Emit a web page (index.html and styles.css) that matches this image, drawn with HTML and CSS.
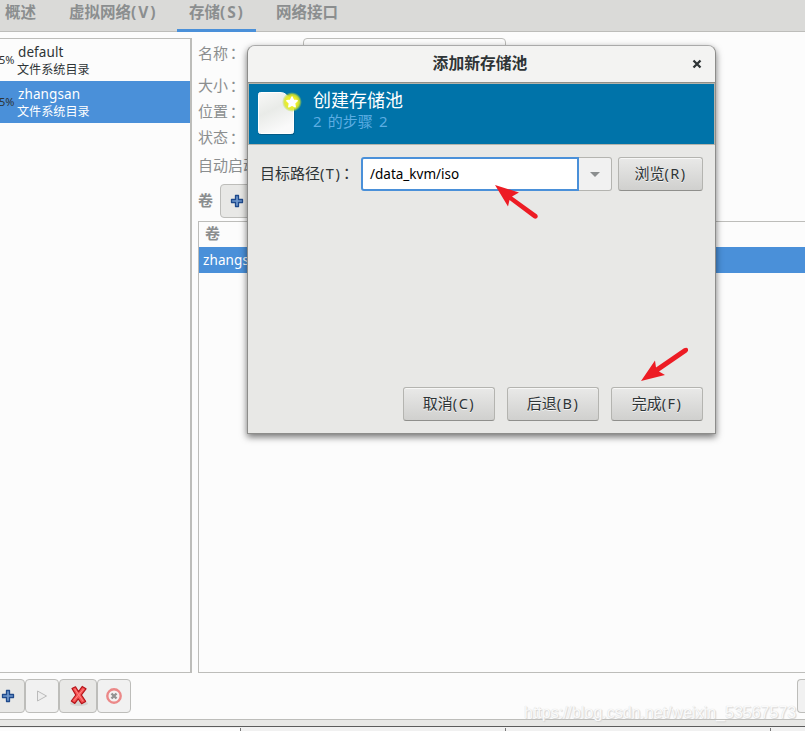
FILE: index.html
```
<!DOCTYPE html>
<html lang="zh-CN">
<head>
  <meta charset="utf-8" />
  <title>添加新存储池</title>
  <link rel="stylesheet" href="styles.css">
</head>
<body>
  <nav class="tabs">
    <div class="tab">概述</div>
    <div class="tab">虚拟网络<span class="key">(V)</span></div>
    <div class="tab active">存储<span class="key">(S)</span></div>
    <div class="tab">网络接口</div>
  </nav>

  <main class="content">
    <div class="pools">
      <div class="pool">
        <span class="percent">15%</span>
        <div><div class="pool-name">default</div><div class="pool-type">文件系统目录</div></div>
      </div>
      <div class="pool selected">
        <span class="percent">15%</span>
        <div><div class="pool-name">zhangsan</div><div class="pool-type">文件系统目录</div></div>
      </div>
    </div>

    <div class="details">
      <div class="field name-field"><label>名称<span class="colon" lang="zh-Hant">：</span></label><div class="name-input"></div></div>
      <div class="field">大小<span class="colon" lang="zh-Hant">：</span></div>
      <div class="field">位置<span class="colon" lang="zh-Hant">：</span></div>
      <div class="field">状态<span class="colon" lang="zh-Hant">：</span></div>
      <div class="field auto-field">自动启动</div>
      <div class="volume-bar">
        <span>卷</span>
        <div class="tool add-volume">
          <svg width="14" height="14" viewBox="0 0 14 14"><path d="M5.5 1.5h3v4h4v3h-4v4h-3v-4h-4v-3h4z" fill="#6d96cc" stroke="#1f4a8c" stroke-width="1.3" stroke-linejoin="round"/></svg>
        </div>
      </div>
      <div class="volumes">
        <div class="volumes-head">卷</div>
        <div class="volume">zhangsan</div>
      </div>
    </div>
  </main>

  <div class="toolbar">
    <div class="tool t-add">
      <svg width="14" height="14" viewBox="0 0 14 14"><path d="M5.5 1.5h3v4h4v3h-4v4h-3v-4h-4v-3h4z" fill="#6d96cc" stroke="#1f4a8c" stroke-width="1.3" stroke-linejoin="round"/></svg>
    </div>
    <div class="tool t-play disabled">
      <svg width="12" height="12" viewBox="0 0 12 12"><path d="M1.5 1v10L10.500 6z" fill="#eee" stroke="#bbb"/></svg>
    </div>
    <div class="tool t-delete">
      <svg width="20" height="22" viewBox="0 0 20 22">
        <ellipse cx="10" cy="18.5" rx="9" ry="2.4" fill="#d3d3d0"/>
        <path d="M3 3.5L6.5 1.8L9.6 6.7L13.2 1.5L17 3.8L12.4 10L16.6 16.4L12.6 18.7L9.2 13.8L5.8 18.4L2.3 16L6.8 10z" fill="#f55454" stroke="#b51218" stroke-width="1.2" stroke-linejoin="round"/>
        <path d="M5.8 4L14 16M14.5 4L5 15.5" stroke="#ff8583" stroke-width="1"/>
      </svg>
    </div>
    <div class="tool t-stop disabled">
      <svg width="18" height="18" viewBox="0 0 18 18"><circle cx="9" cy="9" r="6.7" fill="#f4f0f0" stroke="#eb8888" stroke-width="2.4"/><path d="M6.5 6.5l5 5M11.5 6.5l-5 5" stroke="#929292" stroke-width="2.4"/></svg>
    </div>
    <div class="tool t-apply disabled"></div>
  </div>
  <div class="window-edge"></div>
  <footer class="taskbar"><i></i><i></i><i></i></footer>

  <div class="dialog">
    <header class="dialog-title">
      <span>添加新存储池</span>
      <svg class="close" width="10" height="10" viewBox="0 0 10 10"><path d="M1.5 1.5l7 7M8.5 1.5l-7 7" stroke="#2e3436" stroke-width="2.3"/></svg>
    </header>
    <div class="banner">
      <svg width="49" height="48" viewBox="0 0 49 48">
        <defs>
          <linearGradient id="paper" x1="0" y1="0" x2="0.4" y2="1">
            <stop offset="0" stop-color="#f8f8f7"/><stop offset="0.5" stop-color="#e9ebe8"/><stop offset="1" stop-color="#fafafa"/>
          </linearGradient>
          <radialGradient id="glow"><stop offset="0.5" stop-color="#f0ef25"/><stop offset="0.75" stop-color="#dce827" stop-opacity="0.85"/><stop offset="1" stop-color="#a4d43d" stop-opacity="0"/></radialGradient>
        </defs>
        <rect x="5.5" y="6" width="36" height="41" rx="2" fill="#034b72" opacity="0.6"/>
        <path d="M7.500 4.500H27Q31 4.500 33 6.500L38.500 12Q40.500 14 40.500 18V43.500Q40.500 45.500 38.500 45.500H7.500Q5.500 45.500 5.500 43.500V6.500Q5.500 4.500 7.500 4.500z" fill="url(#paper)" stroke="#fff"/>
        <circle cx="39" cy="14" r="10" fill="url(#glow)"/>
        <path d="M39 9l1.600 3.200 3.600.5-2.600 2.500.6 3.600-3.200-1.700-3.200 1.700.6-3.600-2.600-2.500 3.600-.5z" fill="#fff" stroke="#fff" stroke-width="1.400" stroke-linejoin="round"/>
      </svg>
      <div class="banner-text">
        <div class="banner-head">创建存储池</div>
        <div class="banner-step">2 的步骤 2</div>
      </div>
    </div>
    <div class="path-row">
      <label>目标路径<span class="key">(T)</span><span class="colon" lang="zh-Hant">：</span></label>
      <div class="path-input">/data_kvm/iso</div>
      <div class="path-drop"></div>
      <div class="btn browse">浏览<span class="key">(R)</span></div>
    </div>
    <div class="actions">
      <div class="btn">取消<span class="key">(C)</span></div>
      <div class="btn">后退<span class="key">(B)</span></div>
      <div class="btn">完成<span class="key">(F)</span></div>
    </div>
  </div>

  <svg class="arrow arrow-path" width="46" height="36" viewBox="0 0 46 36"><path d="M0 0L24 7.500L17 11.500L42 29.500Q43.500 31.500 42 33Q40.500 34.300 38.500 33L14.500 15L13 21.500z" fill="#ed1c24"/></svg>
  <svg class="arrow arrow-finish" width="50" height="36" viewBox="0 0 50 36"><path d="M0 34L14 13.500L15 20.500L43 1.300Q46 0 47 2Q47.500 4 46 5.200L18 24.500L24 28z" fill="#ed1c24"/></svg>
  <div class="watermark">https://blog.csdn.net/weixin_53567573</div>
</body>
</html>
```
FILE: styles.css
```
* {
  box-sizing: border-box;
}

html {
  overflow: hidden;
}

body {
  margin: 0;
  width: 805px;
  height: 731px;
  overflow: hidden;
  position: relative;
  background: #fcfcfc;
  color: #2e3436;
  font-family: "Noto Sans", "Noto Sans CJK SC", sans-serif;
  font-size: 15px;
  white-space: nowrap;
  text-spacing-trim: space-all;
}

svg {
  display: block;
  flex: none;
}

.key {
  font-size: 14.5px;
  letter-spacing: 1.5px;
}

.colon {
  margin-left: -2px;
  font-family: "Noto Sans CJK TC", sans-serif;
  line-height: 1;
}

.tabs {
  display: flex;
  height: 32px;
  background: #dadad8;
  border-bottom: 1px solid #bdbdba;
  color: #8b8e8f;
  font-size: 15.5px;
  font-weight: bold;
}

.tab {
  height: 32px;
  line-height: 25px;
  padding: 0 12px;
  margin-right: 9px;
}

.tab:first-child {
  width: 48px;
  padding-left: 5px;
}

.tab:nth-child(2) {
  width: 111px;
}

.tab.active {
  width: 79px;
  margin-right: 8px;
  border-bottom: 3px solid #4a90d9;
}

.tabs .key {
  font-size: 15.5px;
  letter-spacing: 1.9px;
}

.content {
  display: flex;
  height: 641px;
  padding-top: 6px;
}

.pools {
  width: 192px;
  border: 1px solid #bdbdba;
  border-left: 0;
  border-right-width: 2px;
}

.pool {
  display: flex;
  height: 42px;
  padding-top: 4px;
  color: #2e3436;
}

.pool.selected {
  background: #4a90d9;
  color: #fff;
}

.percent {
  width: 25px;
  margin-left: -7px;
  font-size: 11px;
  line-height: 34px;
  letter-spacing: -0.2px;
  color: #2e3436;
}

.pool-name {
  font-size: 13.5px;
  line-height: 18px;
  letter-spacing: 0.1px;
}

.pool-type {
  margin-left: -1px;
  font-size: 12.1px;
  line-height: 17px;
}

.details {
  flex: 1;
  min-width: 0;
  padding-left: 6px;
  display: flex;
  flex-direction: column;
  color: #8b8e8f;
}

.field {
  display: flex;
  align-items: center;
  height: 26px;
  line-height: 26px;
  flex: none;
}

.name-field {
  align-items: flex-start;
  height: 34px;
  line-height: 31px;
}

.name-input {
  width: 203px;
  height: 34px;
  margin-left: 60px;
  border: 1px solid #bdbdba;
  border-radius: 4px;
}

.name-field label {
  width: 45px;
}

.auto-field {
  height: 34px;
  line-height: 30px;
  padding-bottom: 4px;
}

.volume-bar {
  display: flex;
  height: 37px;
  line-height: 33px;
  font-weight: bold;
}

.tool {
  display: flex;
  flex: none;
  align-items: center;
  justify-content: center;
  height: 34px;
  background: #e8e8e6;
  border: 1px solid #bdbdba;
  border-radius: 4px;
}

.tool.disabled {
  background: #f1f1f1;
}

.add-volume {
  width: 34px;
  margin-left: 7px;
}

.volumes {
  flex: 1;
  border: 1px solid #bdbdba;
  border-right: 0;
}

.volumes-head {
  height: 25px;
  padding-left: 6px;
  line-height: 23px;
  font-weight: bold;
}

.volume {
  height: 26px;
  padding-left: 4px;
  line-height: 26px;
  font-size: 13.5px;
  letter-spacing: 0.1px;
  background: #4a90d9;
  color: #fff;
}

.toolbar {
  display: flex;
  height: 46px;
  padding-top: 6px;
}

.t-add {
  width: 34px;
  margin-left: -9px;
}

.t-play {
  width: 34px;
}

.t-delete {
  width: 38px;
  padding-left: 2px;
}

.t-stop {
  width: 34px;
}

.t-apply {
  width: 8px;
  margin-left: 666px;
  border-right: 0;
  border-radius: 4px 0 0 4px;
}

.window-edge {
  height: 8px;
  background: #e8e8e6;
  border-top: 1px solid #bdbdba;
  border-bottom: 1px solid #5c5c5c;
}

.taskbar {
  display: flex;
  height: 4px;
  padding-top: 1px;
  background: #f1f1f1;
}

.taskbar i {
  flex: none;
  width: 265px;
  height: 3px;
  border-right: 1px solid #777;
}

.taskbar i:first-child {
  width: 241px;
  background: #fcfcfc;
}

.dialog {
  position: absolute;
  left: 247px;
  top: 45px;
  width: 469px;
  height: 389px;
  display: flex;
  flex-direction: column;
  background: #e8e8e6;
  border: 1px solid #8d8d8b;
  border-top-color: #aaa;
  border-radius: 8px 8px 0 0;
  box-shadow: 0 3px 7px rgba(0, 0, 0, 0.55);
}

.dialog-title {
  position: relative;
  height: 37px;
  line-height: 34px;
  text-align: center;
  font-weight: bold;
  font-size: 15.8px;
  padding-right: 3px;
  background: #f3f3f2;
  border-bottom: 1px solid #8f8f8a;
  border-radius: 7px 7px 0 0;
}

.close {
  position: absolute;
  right: 13px;
  top: 13px;
}

.banner {
  display: flex;
  height: 62px;
  padding-left: 4px;
  padding-top: 4px;
  background: #0073a9;
  border: 1px solid #b4b4ac;
  color: #fff;
}

.banner-text {
  margin-left: 11px;
}

.banner-head {
  font-size: 18px;
  line-height: 25px;
}

.banner-step {
  font-size: 15px;
  line-height: 16px;
  word-spacing: 2.3px;
  color: #5cade2;
}

.path-row {
  display: flex;
  height: 34px;
  margin: 12px 0 0 12px;
  line-height: 32px;
}

.path-row label {
  width: 101px;
}

.path-input {
  width: 218px;
  padding-left: 7px;
  line-height: 30px;
  border: 2px solid #4a90d9;
  border-radius: 3px 0 0 3px;
  background: #fff;
  color: #000;
  font-size: 13.5px;
}

.path-drop {
  width: 33px;
  display: flex;
  align-items: center;
  justify-content: center;
  background: #f1f1f1;
  border: 1px solid #b4b4b0;
  border-left: 0;
  border-radius: 0 3px 3px 0;
}

.path-drop::after {
  content: "";
  border: 5px solid transparent;
  border-top-color: #8b8e8f;
  border-bottom: 0;
}

.btn {
  width: 92px;
  height: 34px;
  line-height: 30px;
  text-align: center;
  border: 1px solid #b4b4b0;
  border-bottom-color: #8f8f8c;
  border-radius: 3px;
  background: linear-gradient(#e9e9e8, #d0d0ce);
  box-shadow: inset 0 1px #f7f7f6;
  text-shadow: 0 1px #f4f4f4;
}

.btn.browse {
  width: 85px;
  margin-left: 6px;
}

.actions {
  display: flex;
  justify-content: flex-end;
  gap: 12px;
  margin: auto 12px 12px 0;
}

.arrow {
  position: absolute;
}

.arrow-path {
  left: 495px;
  top: 185px;
}

.arrow-finish {
  left: 641px;
  top: 347px;
}

.watermark {
  position: absolute;
  left: 524px;
  top: 703px;
  font: 16px/19px "Liberation Sans", Arial, sans-serif;
  color: #fafafa;
  text-shadow: 0 0 1px #d2d2d2, 1px 1px 1px #d6d6d6;
}
```
